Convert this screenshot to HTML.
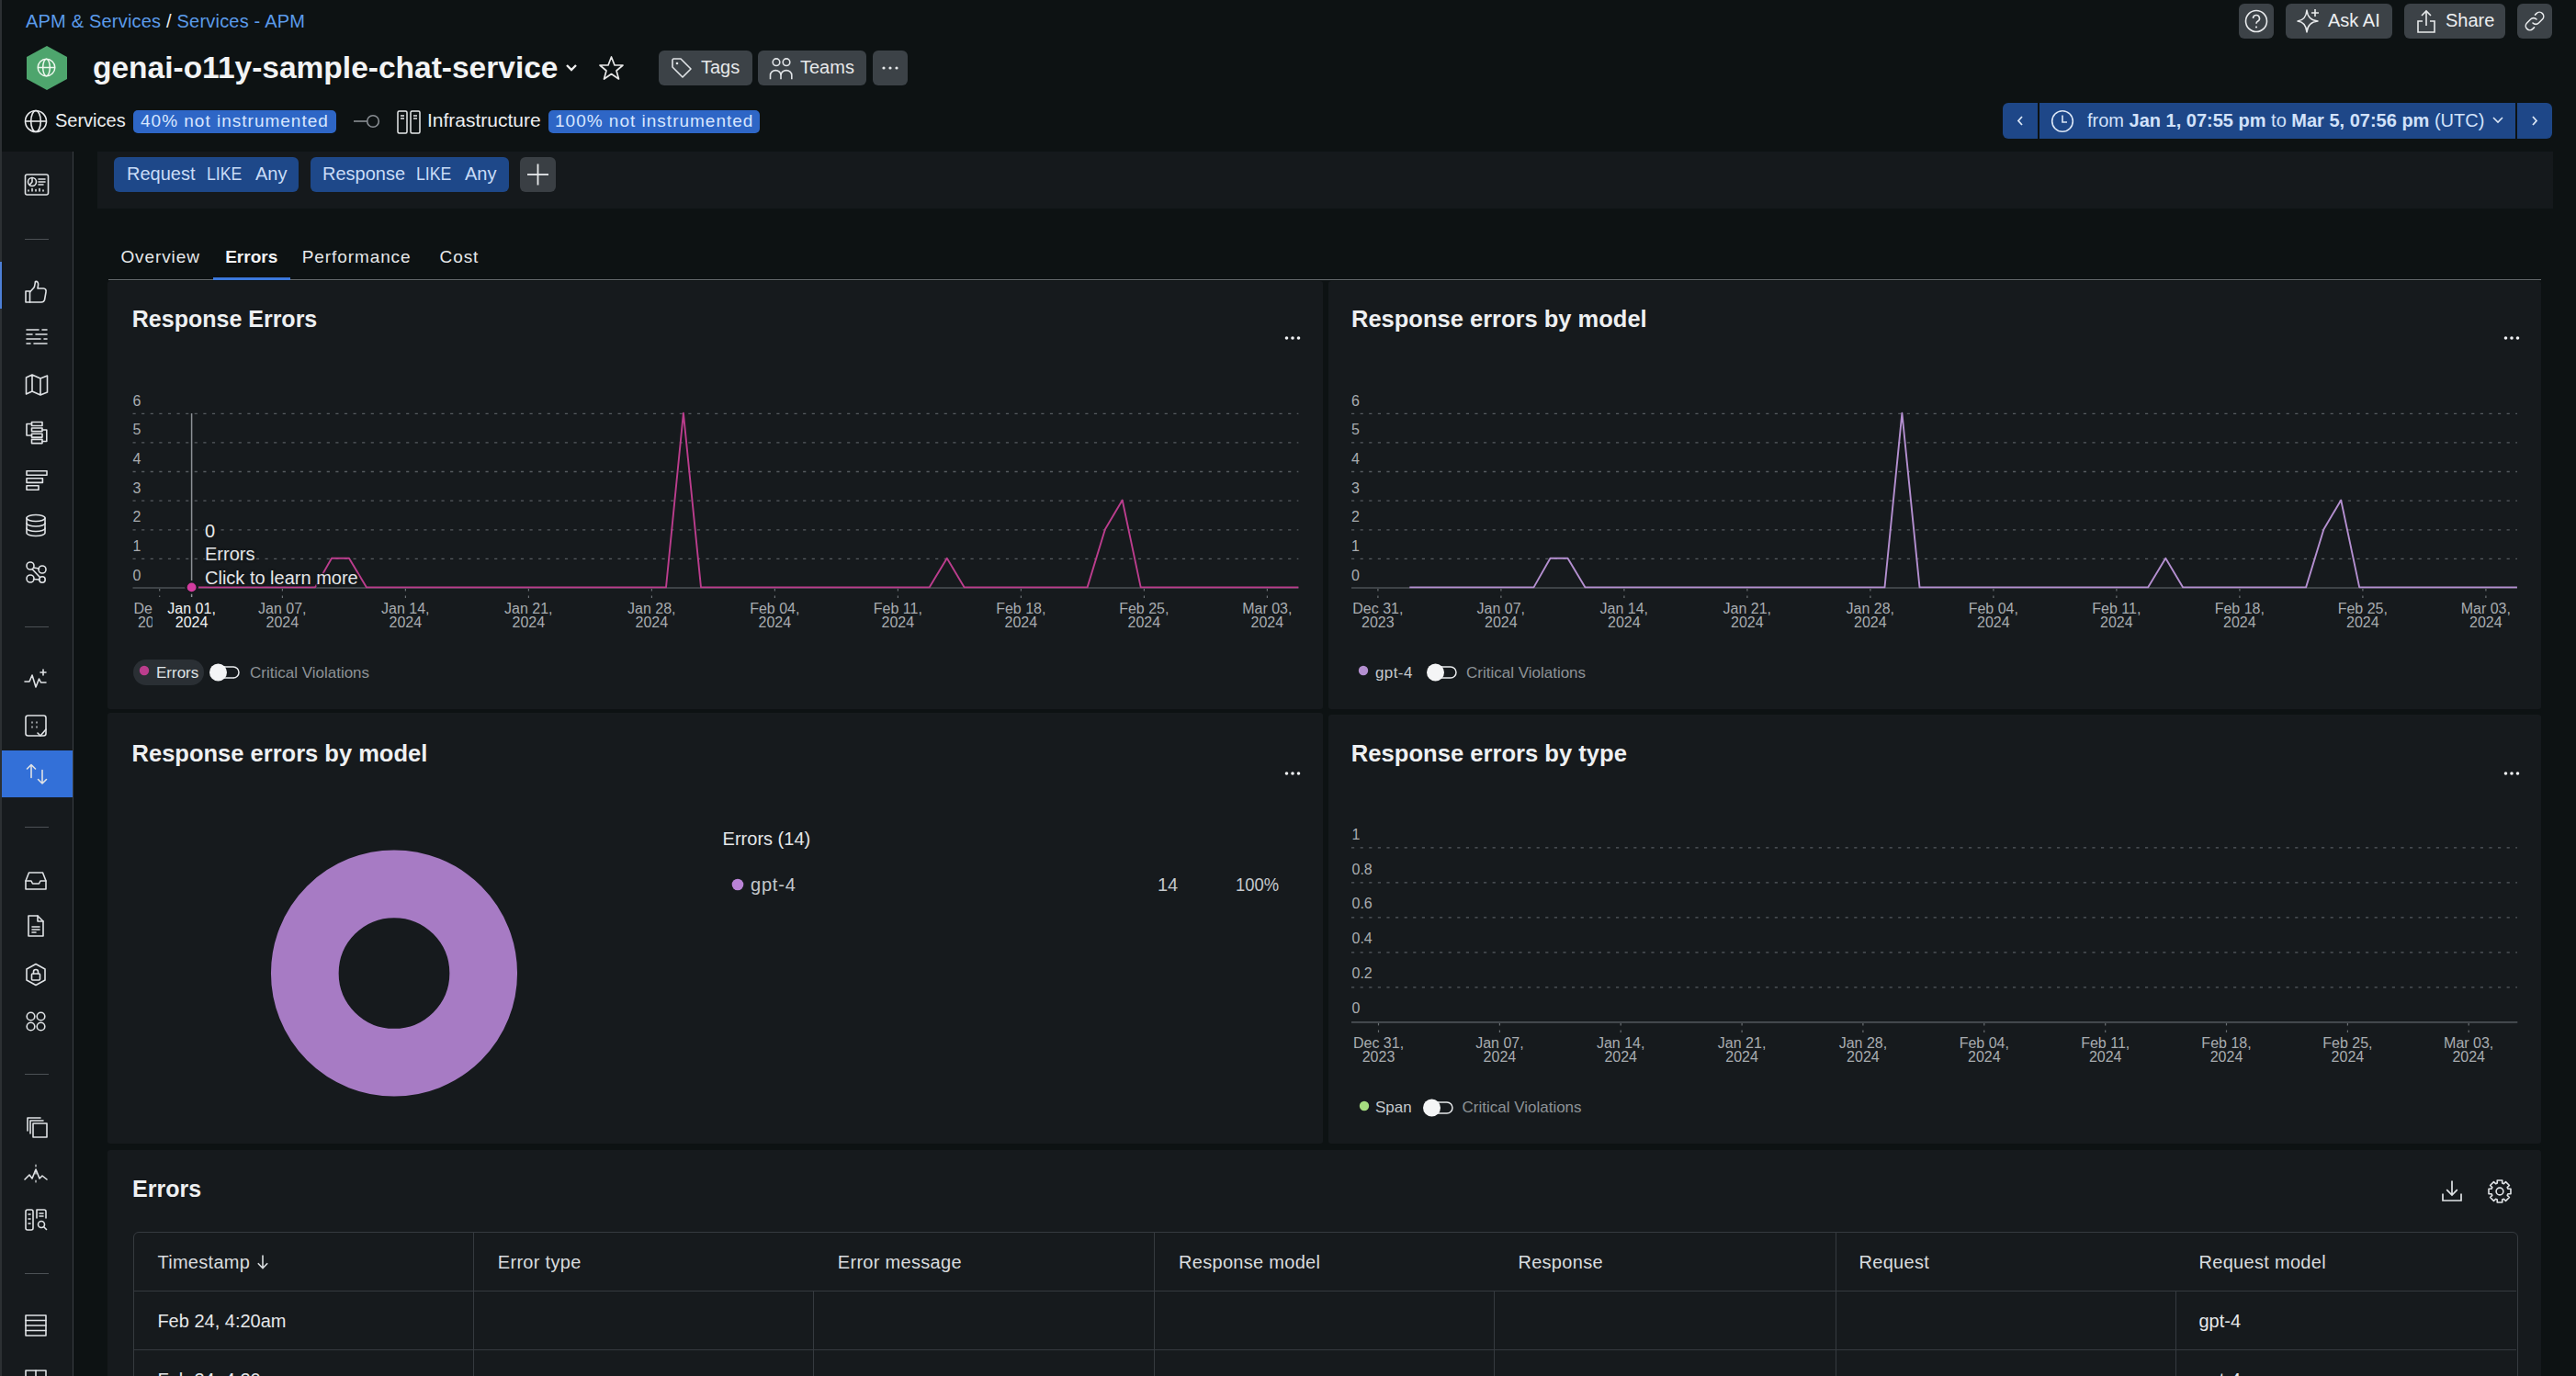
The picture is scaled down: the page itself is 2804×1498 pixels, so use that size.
<!DOCTYPE html><html><head><meta charset="utf-8"><style>
html,body{margin:0;padding:0;width:2804px;height:1498px;overflow:hidden;background:#0d1213;font-family:'Liberation Sans', sans-serif;}
.t{position:absolute;white-space:nowrap;line-height:1;}
.r{position:absolute;}
svg{position:absolute;overflow:visible;}
</style></head><body>
<div class="r" style="left:0px;top:0px;width:2px;height:1498px;background:#2c3033;"></div>
<div class="r" style="left:2px;top:165px;width:77px;height:1333px;background:#161a1d;"></div>
<div class="r" style="left:79px;top:165px;width:1px;height:1333px;background:#3a3f43;"></div>
<div class="r" style="left:0px;top:285px;width:2px;height:51px;background:#4d7fd6;"></div>
<div class="r" style="left:2px;top:817px;width:77px;height:51px;background:#3370d8;"></div>
<div class="r" style="left:106px;top:165px;width:2673px;height:62px;background:#15191c;"></div>
<div class="t" style="left:28px;top:12.9px;font-size:20px;color:#5b9bea;font-weight:400;letter-spacing:0.2px;">APM &amp; Services <span style="color:#e8eaec">/</span> Services - APM</div>
<svg style="left:29px;top:50px" width="44" height="48" viewBox="0 0 44 48"><polygon points="22,0 44,12 44,36 22,48 0,36 0,12" fill="#4ea56d"/><g fill="none" stroke="#eef8ee" stroke-width="1.5"><circle cx="21.5" cy="23.5" r="9.3"/><ellipse cx="21.5" cy="23.5" rx="3.8" ry="9.3"/><line x1="12.2" y1="23.5" x2="30.8" y2="23.5"/></g></svg>
<div class="t" style="left:101px;top:56.6px;font-size:33.5px;color:#f2f3f4;font-weight:700;">genai-o11y-sample-chat-service</div>
<svg style="left:614px;top:68px" width="16" height="12" viewBox="0 0 16 12"><polyline points="3,3 8,8 13,3" fill="none" stroke="#f0f0f0" stroke-width="2.4"/></svg>
<svg style="left:651px;top:60px" width="29" height="28" viewBox="0 0 29 28"><polygon points="14.5,2 18,11 27,11 20,17 22.5,26 14.5,20.5 6.5,26 9,17 2,11 11,11" fill="none" stroke="#e8e8e8" stroke-width="1.7" stroke-linejoin="round"/></svg>
<div class="r" style="left:717px;top:55px;width:102px;height:38px;background:#3c4247;border-radius:6px;"></div>
<svg style="left:729px;top:61px" width="26" height="26" viewBox="0 0 26 26"><path d="M3 4 L3 12 L14 23 L23 14 L12 3 L4 3 Z" fill="none" stroke="#e0e3e6" stroke-width="1.6" stroke-linejoin="round"/><circle cx="8" cy="8" r="1.3" fill="#e0e3e6"/></svg>
<div class="t" style="left:763px;top:62.8px;font-size:20px;color:#e6e8ea;font-weight:400;">Tags</div>
<div class="r" style="left:825px;top:55px;width:118px;height:38px;background:#3c4247;border-radius:6px;"></div>
<svg style="left:836px;top:60px" width="28" height="28" viewBox="0 0 28 28"><g fill="none" stroke="#e0e3e6" stroke-width="1.6"><circle cx="9" cy="7.7" r="3.8"/><circle cx="20" cy="7.7" r="3.8"/><path d="M2.5 26.3 V22 a5.75 5.4 0 0 1 11.5 0 V26.3"/><path d="M14 22 a5.9 5.4 0 0 1 11.8 0 V26.3"/></g></svg>
<div class="t" style="left:871px;top:62.8px;font-size:20px;color:#e6e8ea;font-weight:400;">Teams</div>
<div class="r" style="left:950px;top:55px;width:38px;height:38px;background:#3c4247;border-radius:6px;"></div>
<svg style="left:950px;top:55px" width="38" height="38"><g fill="#e6e8ea"><circle cx="12" cy="19" r="1.6"/><circle cx="19" cy="19" r="1.6"/><circle cx="26" cy="19" r="1.6"/></g></svg>
<svg style="left:26px;top:119px" width="26" height="26" viewBox="0 0 26 26"><g fill="none" stroke="#e8eaec" stroke-width="1.6"><circle cx="13" cy="13" r="11.5"/><ellipse cx="13" cy="13" rx="5.3" ry="11.5"/><line x1="1.5" y1="13" x2="24.5" y2="13"/></g></svg>
<div class="t" style="left:60px;top:120.5px;font-size:20px;color:#eceef0;font-weight:400;">Services</div>
<div class="r" style="left:145px;top:120px;width:221px;height:25px;background:#2e66c6;border-radius:5px;"></div>
<div class="t" style="left:153px;top:121.9px;font-size:19px;color:#d8e6ff;font-weight:400;letter-spacing:1.0px;">40% not instrumented</div>
<svg style="left:384px;top:124px" width="32" height="16" viewBox="0 0 32 16"><line x1="1" y1="8" x2="15" y2="8" stroke="#8a8f94" stroke-width="1.6"/><circle cx="22" cy="8" r="6.3" fill="none" stroke="#8a8f94" stroke-width="1.6"/></svg>
<svg style="left:432px;top:120px" width="27" height="26" viewBox="0 0 27 26"><g fill="none" stroke="#e8eaec" stroke-width="1.5"><rect x="1" y="1" width="10" height="24" rx="1.5"/><rect x="15" y="1" width="10" height="24" rx="1.5"/><line x1="4" y1="6" x2="8" y2="6"/><line x1="4" y1="9" x2="8" y2="9"/><line x1="18" y1="6" x2="22" y2="6"/><line x1="18" y1="9" x2="22" y2="9"/></g></svg>
<div class="t" style="left:465px;top:119.6px;font-size:21px;color:#eceef0;font-weight:400;">Infrastructure</div>
<div class="r" style="left:597px;top:120px;width:230px;height:25px;background:#2e66c6;border-radius:5px;"></div>
<div class="t" style="left:604px;top:121.9px;font-size:19px;color:#d8e6ff;font-weight:400;letter-spacing:1.0px;">100% not instrumented</div>
<div class="r" style="left:2437px;top:4px;width:38px;height:38px;background:#3c4247;border-radius:6px;"></div>
<svg style="left:2437px;top:4px" width="38" height="38" viewBox="0 0 38 38"><circle cx="19" cy="19" r="11.5" fill="none" stroke="#e8eaec" stroke-width="1.6"/><path d="M15.5 16 a3.5 3.5 0 1 1 5 3.2 c-1.2 0.6 -1.5 1.3 -1.5 2.6" fill="none" stroke="#e8eaec" stroke-width="1.6"/><circle cx="19" cy="25.5" r="1.1" fill="#e8eaec"/></svg>
<div class="r" style="left:2488px;top:4px;width:116px;height:38px;background:#3c4247;border-radius:6px;"></div>
<svg style="left:2499px;top:9px" width="28" height="28" viewBox="0 0 28 28"><path d="M12 4 Q13 15 24 16 Q13 17 12 28 Q11 17 2 16 Q11 15 12 4 Z" fill="none" stroke="#e8eaec" stroke-width="1.5" stroke-linejoin="round" transform="translate(0,-2)"/><path d="M21 1 V9 M17 5 H25" stroke="#e8eaec" stroke-width="1.6"/></svg>
<div class="t" style="left:2534px;top:11.7px;font-size:20px;color:#eceef0;font-weight:400;">Ask AI</div>
<div class="r" style="left:2617px;top:4px;width:110px;height:38px;background:#3c4247;border-radius:6px;"></div>
<svg style="left:2630px;top:10px" width="22" height="26" viewBox="0 0 22 26"><g fill="none" stroke="#e8eaec" stroke-width="1.6"><polyline points="7,13 2,13 2,25 20,25 20,13 15,13"/><line x1="11" y1="2" x2="11" y2="18"/><polyline points="6,7 11,2 16,7"/></g></svg>
<div class="t" style="left:2662px;top:11.7px;font-size:20px;color:#eceef0;font-weight:400;">Share</div>
<div class="r" style="left:2740px;top:4px;width:38px;height:38px;background:#3c4247;border-radius:6px;"></div>
<svg style="left:2740px;top:4px" width="38" height="38" viewBox="0 0 38 38"><g fill="none" stroke="#e8eaec" stroke-width="1.6" stroke-linecap="round"><path d="M17 21 a4.5 4.5 0 0 0 6.4 0 l4 -4 a4.5 4.5 0 0 0 -6.4 -6.4 l-1.5 1.5"/><path d="M21 17 a4.5 4.5 0 0 0 -6.4 0 l-4 4 a4.5 4.5 0 0 0 6.4 6.4 l1.5 -1.5"/></g></svg>
<div class="r" style="left:2180px;top:112px;width:38px;height:39px;background:#1e4788;border-radius:6px 0 0 6px;"></div>
<div class="r" style="left:2220px;top:112px;width:518px;height:39px;background:#1e4788;"></div>
<div class="r" style="left:2740px;top:112px;width:38px;height:39px;background:#1e4788;border-radius:0 6px 6px 0;"></div>
<svg style="left:2180px;top:112px" width="38" height="39"><polyline points="21,15 17,19.5 21,24" fill="none" stroke="#dbe6f5" stroke-width="1.8"/></svg>
<svg style="left:2740px;top:112px" width="38" height="39"><polyline points="17,15 21,19.5 17,24" fill="none" stroke="#dbe6f5" stroke-width="1.8"/></svg>
<svg style="left:2232px;top:119px" width="26" height="26" viewBox="0 0 26 26"><circle cx="13" cy="13" r="11.3" fill="none" stroke="#dbe6f5" stroke-width="1.6"/><polyline points="13,6.5 13,14 18,14" fill="none" stroke="#dbe6f5" stroke-width="1.6"/></svg>
<div class="t" style="left:2272px;top:121.0px;font-size:20px;color:#d2e2fa;font-weight:400;">from <b>Jan 1, 07:55 pm</b> to <b>Mar 5, 07:56 pm</b> (UTC)</div>
<svg style="left:2712px;top:124px" width="14" height="14"><polyline points="2,4 7,9 12,4" fill="none" stroke="#dbe6f5" stroke-width="1.6"/></svg>
<div class="r" style="left:124px;top:171px;width:201px;height:38px;background:#1e4889;border-radius:6px;"></div>
<div class="t" style="left:138px;top:179.3px;font-size:20px;color:#c9dcf7;font-weight:400;">Request</div>
<div class="t" style="left:225px;top:179.3px;font-size:20px;color:#c9dcf7;font-weight:400;transform:scaleX(0.885);transform-origin:left;">LIKE</div>
<div class="t" style="left:278px;top:179.3px;font-size:20px;color:#c9dcf7;font-weight:400;">Any</div>
<div class="r" style="left:338px;top:171px;width:216px;height:38px;background:#1e4889;border-radius:6px;"></div>
<div class="t" style="left:351px;top:179.3px;font-size:20px;color:#c9dcf7;font-weight:400;">Response</div>
<div class="t" style="left:453px;top:179.3px;font-size:20px;color:#c9dcf7;font-weight:400;transform:scaleX(0.885);transform-origin:left;">LIKE</div>
<div class="t" style="left:506px;top:179.3px;font-size:20px;color:#c9dcf7;font-weight:400;">Any</div>
<div class="r" style="left:566px;top:171px;width:39px;height:38px;background:#3a3f44;border-radius:6px;"></div>
<svg style="left:566px;top:171px" width="39" height="38"><g stroke="#e8eaec" stroke-width="1.8"><line x1="8" y1="19" x2="31" y2="19"/><line x1="19.5" y1="7.5" x2="19.5" y2="30.5"/></g></svg>
<div class="t" style="left:131.4px;top:269.6px;font-size:19px;color:#e6e8ea;font-weight:400;letter-spacing:0.9px;">Overview</div>
<div class="t" style="left:245.2px;top:269.6px;font-size:19px;color:#f4f5f6;font-weight:700;">Errors</div>
<div class="t" style="left:328.8px;top:269.6px;font-size:19px;color:#e6e8ea;font-weight:400;letter-spacing:0.9px;">Performance</div>
<div class="t" style="left:478.6px;top:269.6px;font-size:19px;color:#e6e8ea;font-weight:400;letter-spacing:0.9px;">Cost</div>
<div class="r" style="left:118px;top:304px;width:2648px;height:1px;background:#676c70;"></div>
<div class="r" style="left:232px;top:301.5px;width:84px;height:3.5px;background:#3b78dc;"></div>
<svg style="left:25.5px;top:187.0px" width="28" height="28" viewBox="0 0 28 28"><g fill="none" stroke="#dfe2e5" stroke-width="1.6" stroke-linecap="round" stroke-linejoin="round"><rect x="1.5" y="3" width="25" height="22" rx="2"/><circle cx="9" cy="11" r="4.5"/><path d="M9 6.5 V11 L6.5 14"/><path d="M16 8 H23 M16 11 H23 M16 14 H21"/><path d="M5 21 V20 M9 21 V18.5 M13 21 V19.5 M17 21 V18.5 M21 21 V20"/></g></svg>
<div class="r" style="left:27px;top:260px;width:26px;height:1px;background:#4c5155;"></div>
<svg style="left:25.0px;top:303.0px" width="28" height="28" viewBox="0 0 28 28"><g fill="none" stroke="#dfe2e5" stroke-width="1.6" stroke-linecap="round" stroke-linejoin="round"><path d="M3 14 H7.5 V26 H3 Z"/><path d="M7.5 15 L12 10 C13 8.5 13 6 13.5 3.5 C16 3 17 5 16.5 8 L16 11 H22.5 C24.5 11 25.5 13 25 15 L23.5 23.5 C23 25 22 26 20 26 H7.5"/></g></svg>
<svg style="left:25.5px;top:353.0px" width="28" height="28" viewBox="0 0 28 28"><g fill="none" stroke="#dfe2e5" stroke-width="1.6" stroke-linecap="round" stroke-linejoin="round"><path d="M3 6 H16 M20 6 H25 M3 11 H9 M13 11 H25 M3 16 H18 M22 16 H25 M3 21 H7 M11 21 H25"/></g></svg>
<svg style="left:25.5px;top:405.0px" width="28" height="28" viewBox="0 0 28 28"><g fill="none" stroke="#dfe2e5" stroke-width="1.6" stroke-linecap="round" stroke-linejoin="round"><path d="M2.5 6 L9 3 L18 7 L25.5 4 V22 L18 25 L9 21 L2.5 24 Z M9 3 V21 M18 7 V25"/></g></svg>
<svg style="left:25.799999999999997px;top:457.0px" width="28" height="28" viewBox="0 0 28 28"><g fill="none" stroke="#dfe2e5" stroke-width="1.6" stroke-linecap="round" stroke-linejoin="round"><rect x="8.5" y="2.5" width="11.5" height="4"/><rect x="8.5" y="9" width="11.5" height="3.6"/><rect x="8.5" y="15.2" width="11.5" height="3.9"/><rect x="8.5" y="21.4" width="11.5" height="4.2"/><path d="M8.5 4.5 H3 V17 H8.5 M20 11 H24.8 V23.5 H20"/></g></svg>
<svg style="left:25.6px;top:509.29999999999995px" width="28" height="28" viewBox="0 0 28 28"><g fill="none" stroke="#dfe2e5" stroke-width="1.6" stroke-linecap="round" stroke-linejoin="round"><rect x="3" y="3.8" width="22" height="4.4"/><rect x="3" y="11.8" width="17.4" height="4.6"/><rect x="3" y="19.8" width="13" height="4.4"/></g></svg>
<svg style="left:25.0px;top:558.0px" width="28" height="28" viewBox="0 0 28 28"><g fill="none" stroke="#dfe2e5" stroke-width="1.6" stroke-linecap="round" stroke-linejoin="round"><ellipse cx="14" cy="6" rx="10" ry="3.5"/><path d="M4 6 V22 C4 24 8.5 25.5 14 25.5 C19.5 25.5 24 24 24 22 V6"/><path d="M4 11.5 C4 13.5 8.5 15 14 15 C19.5 15 24 13.5 24 11.5 M4 17 C4 19 8.5 20.5 14 20.5 C19.5 20.5 24 19 24 17"/></g></svg>
<svg style="left:25.0px;top:609.0px" width="28" height="28" viewBox="0 0 28 28"><g fill="none" stroke="#dfe2e5" stroke-width="1.6" stroke-linecap="round" stroke-linejoin="round"><circle cx="8" cy="7" r="4"/><circle cx="21" cy="11" r="4"/><circle cx="8" cy="21" r="4"/><circle cx="21" cy="22" r="3.2"/><path d="M11.5 9 L17.5 10 M10 10.5 L18 19 M11.5 21.5 L17.8 22"/></g></svg>
<div class="r" style="left:27px;top:682px;width:26px;height:1px;background:#4c5155;"></div>
<svg style="left:25.0px;top:725.0px" width="28" height="28" viewBox="0 0 28 28"><g fill="none" stroke="#dfe2e5" stroke-width="1.6" stroke-linecap="round" stroke-linejoin="round"><path d="M2 17 H7 L10 10 L14 23 L17.5 14 L19.5 18 H25"/><path d="M22 4 V10 M19 7 H25"/></g></svg>
<svg style="left:25.0px;top:776.0px" width="28" height="28" viewBox="0 0 28 28"><g fill="none" stroke="#dfe2e5" stroke-width="1.6" stroke-linecap="round" stroke-linejoin="round"><rect x="3" y="3" width="22" height="22" rx="2.5" stroke-dasharray="0"/><circle cx="10" cy="10.5" r="0.3"/><circle cx="15" cy="10.5" r="0.3"/><circle cx="10" cy="15.5" r="0.3"/><circle cx="15" cy="15.5" r="0.3"/><path d="M16 22 L19 25 L25 18" /></g></svg>
<svg style="left:25.5px;top:828.5px" width="28" height="28" viewBox="0 0 28 28"><g fill="none" stroke="#dfe2e5" stroke-width="1.6" stroke-linecap="round" stroke-linejoin="round"><path d="M8 17.5 V3.5 M3.5 8 L8 3.5 L12.5 8"/><path d="M20 9.5 V24 M15.5 19.5 L20 24 L24.5 19.5"/></g></svg>
<div class="r" style="left:27px;top:900px;width:26px;height:1px;background:#4c5155;"></div>
<svg style="left:25.0px;top:944.5px" width="28" height="28" viewBox="0 0 28 28"><g fill="none" stroke="#dfe2e5" stroke-width="1.6" stroke-linecap="round" stroke-linejoin="round"><path d="M3 14 L6.5 5 H21.5 L25 14 V23 H3 Z"/><path d="M3 14 H9 L10.5 17 H17.5 L19 14 H25"/></g></svg>
<svg style="left:24.5px;top:994.0px" width="28" height="28" viewBox="0 0 28 28"><g fill="none" stroke="#dfe2e5" stroke-width="1.6" stroke-linecap="round" stroke-linejoin="round"><path d="M6 3 H16 L22 9 V25 H6 Z"/><path d="M16 3 V9 H22"/><path d="M10 15 H18 M10 18 H18 M10 21 H14"/></g></svg>
<svg style="left:25.0px;top:1047.0px" width="28" height="28" viewBox="0 0 28 28"><g fill="none" stroke="#dfe2e5" stroke-width="1.6" stroke-linecap="round" stroke-linejoin="round"><path d="M14 2.5 L24 8 V20 L14 25.5 L4 20 V8 Z"/><rect x="9.5" y="13" width="9" height="7" rx="1"/><path d="M11.5 13 V11 a2.5 2.5 0 0 1 5 0 V13"/></g></svg>
<svg style="left:25.0px;top:1097.5px" width="28" height="28" viewBox="0 0 28 28"><g fill="none" stroke="#dfe2e5" stroke-width="1.6" stroke-linecap="round" stroke-linejoin="round"><circle cx="8.5" cy="8.5" r="4.3"/><circle cx="19.5" cy="8.5" r="4.3"/><circle cx="8.5" cy="19.5" r="4.3"/><circle cx="19.5" cy="19.5" r="4.3"/></g></svg>
<div class="r" style="left:27px;top:1169px;width:26px;height:1px;background:#4c5155;"></div>
<svg style="left:25.5px;top:1213.0px" width="28" height="28" viewBox="0 0 28 28"><g fill="none" stroke="#dfe2e5" stroke-width="1.6" stroke-linecap="round" stroke-linejoin="round"><path d="M4 18 V4 H18"/><path d="M7 21 V7 H21"/><rect x="10" y="10" width="15" height="15"/></g></svg>
<svg style="left:25.0px;top:1264.0px" width="28" height="28" viewBox="0 0 28 28"><g fill="none" stroke="#dfe2e5" stroke-width="1.6" stroke-linecap="round" stroke-linejoin="round"><path d="M2 20 L7 15 L10 19 L14 9 L18 19 L21 16 L26 20"/><path d="M14 4 V6 M14 12 V14 M14 21 V23" stroke-width="1.2"/></g></svg>
<svg style="left:25.0px;top:1314.0px" width="28" height="28" viewBox="0 0 28 28"><g fill="none" stroke="#dfe2e5" stroke-width="1.6" stroke-linecap="round" stroke-linejoin="round"><rect x="3" y="3" width="8" height="22" rx="2"/><path d="M6 8 H8 M6 13 H8 M6 18 H8"/><path d="M15 12 V3 H23 a2 2 0 0 1 2 2 V12"/><path d="M18 7 H22 M18 10 H22"/><circle cx="20" cy="19" r="3.5"/><path d="M22.5 21.5 L25.5 24.5"/></g></svg>
<div class="r" style="left:27px;top:1386px;width:26px;height:1px;background:#4c5155;"></div>
<svg style="left:25.0px;top:1429.0px" width="28" height="28" viewBox="0 0 28 28"><g fill="none" stroke="#dfe2e5" stroke-width="1.6" stroke-linecap="round" stroke-linejoin="round"><rect x="3" y="3" width="22" height="22"/><path d="M3 8.5 H25 M3 14 H25 M3 19.5 H25"/></g></svg>
<svg style="left:25.0px;top:1489.0px" width="28" height="28" viewBox="0 0 28 28"><g fill="none" stroke="#dfe2e5" stroke-width="1.6" stroke-linecap="round" stroke-linejoin="round"><rect x="3" y="3" width="22" height="22"/><path d="M3 10 H25 M14 3 V10"/></g></svg>
<div class="r" style="left:117px;top:306px;width:1323px;height:466px;background:#161a1d;border-radius:3px;"></div>
<div class="r" style="left:1446px;top:306px;width:1320px;height:466px;background:#161a1d;border-radius:3px;"></div>
<div class="r" style="left:117px;top:776px;width:1323px;height:469px;background:#161a1d;border-radius:3px;"></div>
<div class="r" style="left:1446px;top:778px;width:1320px;height:467px;background:#161a1d;border-radius:3px;"></div>
<div class="r" style="left:117px;top:1252px;width:2649px;height:258px;background:#161a1d;border-radius:3px;"></div>
<div class="t" style="left:143.8px;top:335.4px;font-size:25px;color:#eef0f2;font-weight:700;">Response Errors</div>
<svg style="left:1395px;top:362.4px" width="24" height="12"><g fill="#f0f2f4"><circle cx="5.5" cy="6" r="1.8"/><circle cx="12" cy="6" r="1.8"/><circle cx="18.5" cy="6" r="1.8"/></g></svg>
<div class="t" style="left:144.5px;top:618.5px;font-size:16px;color:#a8acb0;font-weight:400;">0</div>
<div class="t" style="left:144.5px;top:586.9px;font-size:16px;color:#a8acb0;font-weight:400;">1</div>
<div class="t" style="left:144.5px;top:555.3px;font-size:16px;color:#a8acb0;font-weight:400;">2</div>
<div class="t" style="left:144.5px;top:523.6px;font-size:16px;color:#a8acb0;font-weight:400;">3</div>
<div class="t" style="left:144.5px;top:492.0px;font-size:16px;color:#a8acb0;font-weight:400;">4</div>
<div class="t" style="left:144.5px;top:460.4px;font-size:16px;color:#a8acb0;font-weight:400;">5</div>
<div class="t" style="left:144.5px;top:428.8px;font-size:16px;color:#a8acb0;font-weight:400;">6</div>
<svg style="left:0px;top:0px" width="2804" height="1498"><line x1="144.5" y1="608.4" x2="1413.4" y2="608.4" stroke="#565b60" stroke-width="1.3" stroke-dasharray="3.2 6.4"/><line x1="144.5" y1="576.8" x2="1413.4" y2="576.8" stroke="#565b60" stroke-width="1.3" stroke-dasharray="3.2 6.4"/><line x1="144.5" y1="545.1" x2="1413.4" y2="545.1" stroke="#565b60" stroke-width="1.3" stroke-dasharray="3.2 6.4"/><line x1="144.5" y1="513.5" x2="1413.4" y2="513.5" stroke="#565b60" stroke-width="1.3" stroke-dasharray="3.2 6.4"/><line x1="144.5" y1="481.9" x2="1413.4" y2="481.9" stroke="#565b60" stroke-width="1.3" stroke-dasharray="3.2 6.4"/><line x1="144.5" y1="450.3" x2="1413.4" y2="450.3" stroke="#565b60" stroke-width="1.3" stroke-dasharray="3.2 6.4"/><line x1="144.5" y1="640" x2="1413.4" y2="640" stroke="#4b5055" stroke-width="1.5"/><line x1="307.4" y1="641" x2="307.4" y2="643.5" stroke="#6a6f73" stroke-width="1.2"/><line x1="307.4" y1="648.5" x2="307.4" y2="651" stroke="#6a6f73" stroke-width="1.2"/><line x1="441.4" y1="641" x2="441.4" y2="643.5" stroke="#6a6f73" stroke-width="1.2"/><line x1="441.4" y1="648.5" x2="441.4" y2="651" stroke="#6a6f73" stroke-width="1.2"/><line x1="575.4" y1="641" x2="575.4" y2="643.5" stroke="#6a6f73" stroke-width="1.2"/><line x1="575.4" y1="648.5" x2="575.4" y2="651" stroke="#6a6f73" stroke-width="1.2"/><line x1="709.4" y1="641" x2="709.4" y2="643.5" stroke="#6a6f73" stroke-width="1.2"/><line x1="709.4" y1="648.5" x2="709.4" y2="651" stroke="#6a6f73" stroke-width="1.2"/><line x1="843.4" y1="641" x2="843.4" y2="643.5" stroke="#6a6f73" stroke-width="1.2"/><line x1="843.4" y1="648.5" x2="843.4" y2="651" stroke="#6a6f73" stroke-width="1.2"/><line x1="977.4" y1="641" x2="977.4" y2="643.5" stroke="#6a6f73" stroke-width="1.2"/><line x1="977.4" y1="648.5" x2="977.4" y2="651" stroke="#6a6f73" stroke-width="1.2"/><line x1="1111.4" y1="641" x2="1111.4" y2="643.5" stroke="#6a6f73" stroke-width="1.2"/><line x1="1111.4" y1="648.5" x2="1111.4" y2="651" stroke="#6a6f73" stroke-width="1.2"/><line x1="1245.4" y1="641" x2="1245.4" y2="643.5" stroke="#6a6f73" stroke-width="1.2"/><line x1="1245.4" y1="648.5" x2="1245.4" y2="651" stroke="#6a6f73" stroke-width="1.2"/><line x1="1379.4" y1="641" x2="1379.4" y2="643.5" stroke="#6a6f73" stroke-width="1.2"/><line x1="1379.4" y1="648.5" x2="1379.4" y2="651" stroke="#6a6f73" stroke-width="1.2"/><line x1="208.6" y1="450" x2="208.6" y2="651" stroke="#8c9196" stroke-width="1.5"/><line x1="173.7" y1="641" x2="173.7" y2="643.5" stroke="#6a6f73" stroke-width="1.2"/><line x1="173.7" y1="648.5" x2="173.7" y2="651" stroke="#6a6f73" stroke-width="1.2"/><polyline points="207.8,639.4 343.0,639.4 361.0,607.8 380.0,607.8 399.0,639.4 725.0,639.4 743.9,449.7 763.0,639.4 1011.6,639.4 1030.8,607.8 1049.7,639.4 1183.6,639.4 1202.9,576.2 1221.7,544.5 1241.7,639.4 1413.4,639.4" fill="none" stroke="#bb3d8d" stroke-width="1.9" stroke-linejoin="round"/><circle cx="208.6" cy="639.4" r="7.4" fill="#161a1d"/><circle cx="208.6" cy="639.4" r="4.9" fill="#d23c9f"/></svg>
<div class="t" style="left:307.3px;top:655.0px;font-size:16px;line-height:15.2px;color:#a8acb0;text-align:center;transform:translateX(-50%)">Jan 07,<br>2024</div>
<div class="t" style="left:441.3px;top:655.0px;font-size:16px;line-height:15.2px;color:#a8acb0;text-align:center;transform:translateX(-50%)">Jan 14,<br>2024</div>
<div class="t" style="left:575.3px;top:655.0px;font-size:16px;line-height:15.2px;color:#a8acb0;text-align:center;transform:translateX(-50%)">Jan 21,<br>2024</div>
<div class="t" style="left:709.3px;top:655.0px;font-size:16px;line-height:15.2px;color:#a8acb0;text-align:center;transform:translateX(-50%)">Jan 28,<br>2024</div>
<div class="t" style="left:843.3px;top:655.0px;font-size:16px;line-height:15.2px;color:#a8acb0;text-align:center;transform:translateX(-50%)">Feb 04,<br>2024</div>
<div class="t" style="left:977.3px;top:655.0px;font-size:16px;line-height:15.2px;color:#a8acb0;text-align:center;transform:translateX(-50%)">Feb 11,<br>2024</div>
<div class="t" style="left:1111.3px;top:655.0px;font-size:16px;line-height:15.2px;color:#a8acb0;text-align:center;transform:translateX(-50%)">Feb 18,<br>2024</div>
<div class="t" style="left:1245.3px;top:655.0px;font-size:16px;line-height:15.2px;color:#a8acb0;text-align:center;transform:translateX(-50%)">Feb 25,<br>2024</div>
<div class="t" style="left:1379.3px;top:655.0px;font-size:16px;line-height:15.2px;color:#a8acb0;text-align:center;transform:translateX(-50%)">Mar 03,<br>2024</div>
<div class="t" style="left:145.5px;top:655px;font-size:16px;line-height:15.2px;color:#a8acb0;">Dec<br>&nbsp;20</div>
<div class="r" style="left:166px;top:650px;width:62px;height:36px;background:#161a1d;"></div>
<div class="t" style="left:208.6px;top:655px;font-size:16px;line-height:15.2px;color:#f2f3f4;text-align:center;transform:translateX(-50%)">Jan 01,<br>2024</div>
<div class="t" style="left:223px;top:567.9px;font-size:20px;color:#e8e9ea;font-weight:400;text-shadow:1.5px 1.5px 1px #161a1d,-1.5px -1.5px 1px #161a1d,1.5px -1.5px 1px #161a1d,-1.5px 1.5px 1px #161a1d,0 0 3px #161a1d;">0</div>
<div class="t" style="left:223px;top:592.5px;font-size:20px;color:#e4e6e8;font-weight:400;text-shadow:1.5px 1.5px 1px #161a1d,-1.5px -1.5px 1px #161a1d,1.5px -1.5px 1px #161a1d,-1.5px 1.5px 1px #161a1d,0 0 3px #161a1d;">Errors</div>
<div class="t" style="left:223px;top:619.2px;font-size:20px;color:#e4e6e8;font-weight:400;text-shadow:1.5px 1.5px 1px #161a1d,-1.5px -1.5px 1px #161a1d,1.5px -1.5px 1px #161a1d,-1.5px 1.5px 1px #161a1d,0 0 3px #161a1d;">Click to learn more</div>
<div class="r" style="left:144.5px;top:718.4px;width:77.5px;height:27.4px;background:#2a2f34;border-radius:14px;"></div>
<svg style="left:151px;top:724px" width="12" height="12"><circle cx="6" cy="6" r="5.2" fill="#bb3d8d"/></svg>
<div class="t" style="left:170px;top:724.0px;font-size:17px;color:#dfe2e5;font-weight:400;">Errors</div>
<svg style="left:227px;top:721px" width="36" height="22" viewBox="0 0 36 22"><rect x="4" y="5" width="29" height="12" rx="6" fill="none" stroke="#e8eaec" stroke-width="1.5"/><circle cx="10.5" cy="11" r="9.5" fill="#f4f5f6"/></svg>
<div class="t" style="left:272px;top:724.0px;font-size:17px;color:#8d9296;font-weight:400;">Critical Violations</div>
<div class="t" style="left:1471px;top:335.0px;font-size:25.5px;color:#eef0f2;font-weight:700;">Response errors by model</div>
<svg style="left:2722px;top:362.4px" width="24" height="12"><g fill="#f0f2f4"><circle cx="5.5" cy="6" r="1.8"/><circle cx="12" cy="6" r="1.8"/><circle cx="18.5" cy="6" r="1.8"/></g></svg>
<div class="t" style="left:1471px;top:618.5px;font-size:16px;color:#a8acb0;font-weight:400;">0</div>
<div class="t" style="left:1471px;top:586.9px;font-size:16px;color:#a8acb0;font-weight:400;">1</div>
<div class="t" style="left:1471px;top:555.3px;font-size:16px;color:#a8acb0;font-weight:400;">2</div>
<div class="t" style="left:1471px;top:523.6px;font-size:16px;color:#a8acb0;font-weight:400;">3</div>
<div class="t" style="left:1471px;top:492.0px;font-size:16px;color:#a8acb0;font-weight:400;">4</div>
<div class="t" style="left:1471px;top:460.4px;font-size:16px;color:#a8acb0;font-weight:400;">5</div>
<div class="t" style="left:1471px;top:428.8px;font-size:16px;color:#a8acb0;font-weight:400;">6</div>
<svg style="left:0px;top:0px" width="2804" height="1498"><line x1="1471" y1="608.4" x2="2740" y2="608.4" stroke="#565b60" stroke-width="1.3" stroke-dasharray="3.2 6.4"/><line x1="1471" y1="576.8" x2="2740" y2="576.8" stroke="#565b60" stroke-width="1.3" stroke-dasharray="3.2 6.4"/><line x1="1471" y1="545.1" x2="2740" y2="545.1" stroke="#565b60" stroke-width="1.3" stroke-dasharray="3.2 6.4"/><line x1="1471" y1="513.5" x2="2740" y2="513.5" stroke="#565b60" stroke-width="1.3" stroke-dasharray="3.2 6.4"/><line x1="1471" y1="481.9" x2="2740" y2="481.9" stroke="#565b60" stroke-width="1.3" stroke-dasharray="3.2 6.4"/><line x1="1471" y1="450.3" x2="2740" y2="450.3" stroke="#565b60" stroke-width="1.3" stroke-dasharray="3.2 6.4"/><line x1="1471" y1="640" x2="2740" y2="640" stroke="#4b5055" stroke-width="1.5"/><line x1="1499.9" y1="641" x2="1499.9" y2="643.5" stroke="#6a6f73" stroke-width="1.2"/><line x1="1499.9" y1="648.5" x2="1499.9" y2="651" stroke="#6a6f73" stroke-width="1.2"/><line x1="1633.9" y1="641" x2="1633.9" y2="643.5" stroke="#6a6f73" stroke-width="1.2"/><line x1="1633.9" y1="648.5" x2="1633.9" y2="651" stroke="#6a6f73" stroke-width="1.2"/><line x1="1767.9" y1="641" x2="1767.9" y2="643.5" stroke="#6a6f73" stroke-width="1.2"/><line x1="1767.9" y1="648.5" x2="1767.9" y2="651" stroke="#6a6f73" stroke-width="1.2"/><line x1="1901.9" y1="641" x2="1901.9" y2="643.5" stroke="#6a6f73" stroke-width="1.2"/><line x1="1901.9" y1="648.5" x2="1901.9" y2="651" stroke="#6a6f73" stroke-width="1.2"/><line x1="2035.9" y1="641" x2="2035.9" y2="643.5" stroke="#6a6f73" stroke-width="1.2"/><line x1="2035.9" y1="648.5" x2="2035.9" y2="651" stroke="#6a6f73" stroke-width="1.2"/><line x1="2169.9" y1="641" x2="2169.9" y2="643.5" stroke="#6a6f73" stroke-width="1.2"/><line x1="2169.9" y1="648.5" x2="2169.9" y2="651" stroke="#6a6f73" stroke-width="1.2"/><line x1="2303.9" y1="641" x2="2303.9" y2="643.5" stroke="#6a6f73" stroke-width="1.2"/><line x1="2303.9" y1="648.5" x2="2303.9" y2="651" stroke="#6a6f73" stroke-width="1.2"/><line x1="2437.9" y1="641" x2="2437.9" y2="643.5" stroke="#6a6f73" stroke-width="1.2"/><line x1="2437.9" y1="648.5" x2="2437.9" y2="651" stroke="#6a6f73" stroke-width="1.2"/><line x1="2571.9" y1="641" x2="2571.9" y2="643.5" stroke="#6a6f73" stroke-width="1.2"/><line x1="2571.9" y1="648.5" x2="2571.9" y2="651" stroke="#6a6f73" stroke-width="1.2"/><line x1="2705.9" y1="641" x2="2705.9" y2="643.5" stroke="#6a6f73" stroke-width="1.2"/><line x1="2705.9" y1="648.5" x2="2705.9" y2="651" stroke="#6a6f73" stroke-width="1.2"/><polyline points="1534.3,639.4 1669.5,639.4 1687.5,607.8 1706.5,607.8 1725.5,639.4 2051.5,639.4 2070.4,449.7 2089.5,639.4 2338.1,639.4 2357.3,607.8 2376.2,639.4 2510.1,639.4 2529.4,576.2 2548.2,544.5 2568.2,639.4 2739.9,639.4" fill="none" stroke="#b48fd0" stroke-width="1.9" stroke-linejoin="round"/></svg>
<div class="t" style="left:1499.8px;top:655.0px;font-size:16px;line-height:15.2px;color:#a8acb0;text-align:center;transform:translateX(-50%)">Dec 31,<br>2023</div>
<div class="t" style="left:1633.8px;top:655.0px;font-size:16px;line-height:15.2px;color:#a8acb0;text-align:center;transform:translateX(-50%)">Jan 07,<br>2024</div>
<div class="t" style="left:1767.8px;top:655.0px;font-size:16px;line-height:15.2px;color:#a8acb0;text-align:center;transform:translateX(-50%)">Jan 14,<br>2024</div>
<div class="t" style="left:1901.8px;top:655.0px;font-size:16px;line-height:15.2px;color:#a8acb0;text-align:center;transform:translateX(-50%)">Jan 21,<br>2024</div>
<div class="t" style="left:2035.8px;top:655.0px;font-size:16px;line-height:15.2px;color:#a8acb0;text-align:center;transform:translateX(-50%)">Jan 28,<br>2024</div>
<div class="t" style="left:2169.8px;top:655.0px;font-size:16px;line-height:15.2px;color:#a8acb0;text-align:center;transform:translateX(-50%)">Feb 04,<br>2024</div>
<div class="t" style="left:2303.8px;top:655.0px;font-size:16px;line-height:15.2px;color:#a8acb0;text-align:center;transform:translateX(-50%)">Feb 11,<br>2024</div>
<div class="t" style="left:2437.8px;top:655.0px;font-size:16px;line-height:15.2px;color:#a8acb0;text-align:center;transform:translateX(-50%)">Feb 18,<br>2024</div>
<div class="t" style="left:2571.8px;top:655.0px;font-size:16px;line-height:15.2px;color:#a8acb0;text-align:center;transform:translateX(-50%)">Feb 25,<br>2024</div>
<div class="t" style="left:2705.8px;top:655.0px;font-size:16px;line-height:15.2px;color:#a8acb0;text-align:center;transform:translateX(-50%)">Mar 03,<br>2024</div>
<svg style="left:1478px;top:724px" width="12" height="12"><circle cx="6" cy="6" r="5.2" fill="#b48fd0"/></svg>
<div class="t" style="left:1497px;top:724.0px;font-size:17px;color:#c4c8cc;font-weight:400;letter-spacing:0.4px;">gpt-4</div>
<svg style="left:1552px;top:721px" width="36" height="22" viewBox="0 0 36 22"><rect x="4" y="5" width="29" height="12" rx="6" fill="none" stroke="#e8eaec" stroke-width="1.5"/><circle cx="10.5" cy="11" r="9.5" fill="#f4f5f6"/></svg>
<div class="t" style="left:1596px;top:724.0px;font-size:17px;color:#8d9296;font-weight:400;">Critical Violations</div>
<div class="t" style="left:143.6px;top:808.4px;font-size:25.5px;color:#eef0f2;font-weight:700;">Response errors by model</div>
<svg style="left:1395px;top:835.5px" width="24" height="12"><g fill="#f0f2f4"><circle cx="5.5" cy="6" r="1.8"/><circle cx="12" cy="6" r="1.8"/><circle cx="18.5" cy="6" r="1.8"/></g></svg>
<svg style="left:0;top:0" width="2804" height="1498"><circle cx="429" cy="1059.5" r="97.2" fill="none" stroke="#a77bc4" stroke-width="73.7"/></svg>
<div class="t" style="left:786.6px;top:902.5px;font-size:20px;color:#e4e6e8;font-weight:400;">Errors (14)</div>
<svg style="left:796px;top:956px" width="14" height="14"><circle cx="7" cy="7" r="6.3" fill="#b983d6"/></svg>
<div class="t" style="left:817px;top:953.2px;font-size:20px;color:#c4c8cc;font-weight:400;letter-spacing:0.8px;">gpt-4</div>
<div class="t" style="left:1260px;top:953.2px;font-size:20px;color:#c4c8cc;font-weight:400;">14</div>
<div class="t" style="left:1344.7px;top:953.2px;font-size:20px;color:#c4c8cc;font-weight:400;transform:scaleX(0.92);transform-origin:left;">100%</div>
<div class="t" style="left:1470.8px;top:808.3px;font-size:25.6px;color:#eef0f2;font-weight:700;">Response errors by type</div>
<svg style="left:2722px;top:835.5px" width="24" height="12"><g fill="#f0f2f4"><circle cx="5.5" cy="6" r="1.8"/><circle cx="12" cy="6" r="1.8"/><circle cx="18.5" cy="6" r="1.8"/></g></svg>
<svg style="left:0;top:0" width="2804" height="1498"><line x1="1471" y1="1074.9" x2="2740" y2="1074.9" stroke="#565b60" stroke-width="1.3" stroke-dasharray="3.2 6.4"/><line x1="1471" y1="1036.9" x2="2740" y2="1036.9" stroke="#565b60" stroke-width="1.3" stroke-dasharray="3.2 6.4"/><line x1="1471" y1="998.9" x2="2740" y2="998.9" stroke="#565b60" stroke-width="1.3" stroke-dasharray="3.2 6.4"/><line x1="1471" y1="960.9" x2="2740" y2="960.9" stroke="#565b60" stroke-width="1.3" stroke-dasharray="3.2 6.4"/><line x1="1471" y1="922.9" x2="2740" y2="922.9" stroke="#565b60" stroke-width="1.3" stroke-dasharray="3.2 6.4"/><line x1="1471" y1="1112.9" x2="2740.3" y2="1112.9" stroke="#4b5055" stroke-width="1.8"/><line x1="1500.5" y1="1113.9" x2="1500.5" y2="1116.4" stroke="#6a6f73" stroke-width="1.2"/><line x1="1500.5" y1="1121.4" x2="1500.5" y2="1123.9" stroke="#6a6f73" stroke-width="1.2"/><line x1="1632.4" y1="1113.9" x2="1632.4" y2="1116.4" stroke="#6a6f73" stroke-width="1.2"/><line x1="1632.4" y1="1121.4" x2="1632.4" y2="1123.9" stroke="#6a6f73" stroke-width="1.2"/><line x1="1764.2" y1="1113.9" x2="1764.2" y2="1116.4" stroke="#6a6f73" stroke-width="1.2"/><line x1="1764.2" y1="1121.4" x2="1764.2" y2="1123.9" stroke="#6a6f73" stroke-width="1.2"/><line x1="1896.1" y1="1113.9" x2="1896.1" y2="1116.4" stroke="#6a6f73" stroke-width="1.2"/><line x1="1896.1" y1="1121.4" x2="1896.1" y2="1123.9" stroke="#6a6f73" stroke-width="1.2"/><line x1="2027.9" y1="1113.9" x2="2027.9" y2="1116.4" stroke="#6a6f73" stroke-width="1.2"/><line x1="2027.9" y1="1121.4" x2="2027.9" y2="1123.9" stroke="#6a6f73" stroke-width="1.2"/><line x1="2159.8" y1="1113.9" x2="2159.8" y2="1116.4" stroke="#6a6f73" stroke-width="1.2"/><line x1="2159.8" y1="1121.4" x2="2159.8" y2="1123.9" stroke="#6a6f73" stroke-width="1.2"/><line x1="2291.7" y1="1113.9" x2="2291.7" y2="1116.4" stroke="#6a6f73" stroke-width="1.2"/><line x1="2291.7" y1="1121.4" x2="2291.7" y2="1123.9" stroke="#6a6f73" stroke-width="1.2"/><line x1="2423.5" y1="1113.9" x2="2423.5" y2="1116.4" stroke="#6a6f73" stroke-width="1.2"/><line x1="2423.5" y1="1121.4" x2="2423.5" y2="1123.9" stroke="#6a6f73" stroke-width="1.2"/><line x1="2555.4" y1="1113.9" x2="2555.4" y2="1116.4" stroke="#6a6f73" stroke-width="1.2"/><line x1="2555.4" y1="1121.4" x2="2555.4" y2="1123.9" stroke="#6a6f73" stroke-width="1.2"/><line x1="2687.2" y1="1113.9" x2="2687.2" y2="1116.4" stroke="#6a6f73" stroke-width="1.2"/><line x1="2687.2" y1="1121.4" x2="2687.2" y2="1123.9" stroke="#6a6f73" stroke-width="1.2"/></svg>
<div class="t" style="left:1471.5px;top:900.7px;font-size:16px;color:#a8acb0;font-weight:400;">1</div>
<div class="t" style="left:1471.5px;top:938.7px;font-size:16px;color:#a8acb0;font-weight:400;">0.8</div>
<div class="t" style="left:1471.5px;top:976.2px;font-size:16px;color:#a8acb0;font-weight:400;">0.6</div>
<div class="t" style="left:1471.5px;top:1014.2px;font-size:16px;color:#a8acb0;font-weight:400;">0.4</div>
<div class="t" style="left:1471.5px;top:1052.2px;font-size:16px;color:#a8acb0;font-weight:400;">0.2</div>
<div class="t" style="left:1471.5px;top:1090.2px;font-size:16px;color:#a8acb0;font-weight:400;">0</div>
<div class="t" style="left:1500.5px;top:1127.5px;font-size:16px;line-height:15.5px;color:#a8acb0;text-align:center;transform:translateX(-50%)">Dec 31,<br>2023</div>
<div class="t" style="left:1632.4px;top:1127.5px;font-size:16px;line-height:15.5px;color:#a8acb0;text-align:center;transform:translateX(-50%)">Jan 07,<br>2024</div>
<div class="t" style="left:1764.2px;top:1127.5px;font-size:16px;line-height:15.5px;color:#a8acb0;text-align:center;transform:translateX(-50%)">Jan 14,<br>2024</div>
<div class="t" style="left:1896.1px;top:1127.5px;font-size:16px;line-height:15.5px;color:#a8acb0;text-align:center;transform:translateX(-50%)">Jan 21,<br>2024</div>
<div class="t" style="left:2027.9px;top:1127.5px;font-size:16px;line-height:15.5px;color:#a8acb0;text-align:center;transform:translateX(-50%)">Jan 28,<br>2024</div>
<div class="t" style="left:2159.8px;top:1127.5px;font-size:16px;line-height:15.5px;color:#a8acb0;text-align:center;transform:translateX(-50%)">Feb 04,<br>2024</div>
<div class="t" style="left:2291.7px;top:1127.5px;font-size:16px;line-height:15.5px;color:#a8acb0;text-align:center;transform:translateX(-50%)">Feb 11,<br>2024</div>
<div class="t" style="left:2423.5px;top:1127.5px;font-size:16px;line-height:15.5px;color:#a8acb0;text-align:center;transform:translateX(-50%)">Feb 18,<br>2024</div>
<div class="t" style="left:2555.4px;top:1127.5px;font-size:16px;line-height:15.5px;color:#a8acb0;text-align:center;transform:translateX(-50%)">Feb 25,<br>2024</div>
<div class="t" style="left:2687.2px;top:1127.5px;font-size:16px;line-height:15.5px;color:#a8acb0;text-align:center;transform:translateX(-50%)">Mar 03,<br>2024</div>
<svg style="left:1479px;top:1198px" width="12" height="12"><circle cx="6" cy="6" r="5.2" fill="#a5dd7f"/></svg>
<div class="t" style="left:1497px;top:1196.7px;font-size:17px;color:#c4c8cc;font-weight:400;">Span</div>
<svg style="left:1548px;top:1195px" width="36" height="22" viewBox="0 0 36 22"><rect x="4" y="5" width="29" height="12" rx="6" fill="none" stroke="#e8eaec" stroke-width="1.5"/><circle cx="10.5" cy="11" r="9.5" fill="#f4f5f6"/></svg>
<div class="t" style="left:1591.5px;top:1196.7px;font-size:17px;color:#8d9296;font-weight:400;">Critical Violations</div>
<div class="t" style="left:144px;top:1281.8px;font-size:25px;color:#eef0f2;font-weight:700;">Errors</div>
<svg style="left:2655px;top:1282px" width="28" height="28" viewBox="0 0 28 28"><g fill="none" stroke="#e0e3e6" stroke-width="1.7"><path d="M14 3.5 V19 M8.2 13.2 L14 19 L19.8 13.2"/><path d="M4 17.5 V25 H24 V17.5"/></g></svg>
<svg style="left:2706.7px;top:1282.5px" width="28" height="28" viewBox="0 0 28 28"><g fill="none" stroke="#e0e3e6" stroke-width="1.6" stroke-linejoin="round"><circle cx="14" cy="14" r="3.9"/><path d="M11.28 5.11 L11.23 2.02 L16.77 2.02 L16.72 5.11 L18.37 5.79 L20.52 3.57 L24.43 7.48 L22.21 9.63 L22.89 11.28 L25.98 11.23 L25.98 16.77 L22.89 16.72 L22.21 18.37 L24.43 20.52 L20.52 24.43 L18.37 22.21 L16.72 22.89 L16.77 25.98 L11.23 25.98 L11.28 22.89 L9.63 22.21 L7.48 24.43 L3.57 20.52 L5.79 18.37 L5.11 16.72 L2.02 16.77 L2.02 11.23 L5.11 11.28 L5.79 9.63 L3.57 7.48 L7.48 3.57 L9.63 5.79 Z"/></g></svg>
<div class="r" style="left:144.5px;top:1341px;width:2594px;height:200px;border:1px solid #353a3f;border-radius:6px;"></div>
<div class="r" style="left:145px;top:1405px;width:2594px;height:1px;background:#353a3f;"></div>
<div class="r" style="left:145px;top:1469px;width:2594px;height:1px;background:#353a3f;"></div>
<div class="r" style="left:515px;top:1341px;width:1px;height:200px;background:#353a3f;"></div>
<div class="r" style="left:1256px;top:1341px;width:1px;height:200px;background:#353a3f;"></div>
<div class="r" style="left:1998px;top:1341px;width:1px;height:200px;background:#353a3f;"></div>
<div class="r" style="left:885px;top:1405px;width:1px;height:200px;background:#353a3f;"></div>
<div class="r" style="left:1626px;top:1405px;width:1px;height:200px;background:#353a3f;"></div>
<div class="r" style="left:2368px;top:1405px;width:1px;height:200px;background:#353a3f;"></div>
<div class="t" style="left:171.4px;top:1364.0px;font-size:20px;color:#d9dcdf;font-weight:400;letter-spacing:0.3px;">Timestamp</div>
<div class="t" style="left:541.8px;top:1364.0px;font-size:20px;color:#d9dcdf;font-weight:400;letter-spacing:0.3px;">Error type</div>
<div class="t" style="left:911.8px;top:1364.0px;font-size:20px;color:#d9dcdf;font-weight:400;letter-spacing:0.3px;">Error message</div>
<div class="t" style="left:1283px;top:1364.0px;font-size:20px;color:#d9dcdf;font-weight:400;letter-spacing:0.3px;">Response model</div>
<div class="t" style="left:1652.4px;top:1364.0px;font-size:20px;color:#d9dcdf;font-weight:400;letter-spacing:0.3px;">Response</div>
<div class="t" style="left:2023.5px;top:1364.0px;font-size:20px;color:#d9dcdf;font-weight:400;letter-spacing:0.3px;">Request</div>
<div class="t" style="left:2393.5px;top:1364.0px;font-size:20px;color:#d9dcdf;font-weight:400;letter-spacing:0.3px;">Request model</div>
<svg style="left:278px;top:1364px" width="16" height="19"><g fill="none" stroke="#d9dcdf" stroke-width="1.6"><path d="M8 2.5 V16.5 M2.8 11.3 L8 16.5 L13.2 11.3"/></g></svg>
<div class="t" style="left:171.4px;top:1427.5px;font-size:20px;color:#e6e8ea;font-weight:400;">Feb 24, 4:20am</div>
<div class="t" style="left:2393.5px;top:1427.5px;font-size:20px;color:#e6e8ea;font-weight:400;">gpt-4</div>
<div class="t" style="left:171.4px;top:1491.6px;font-size:20px;color:#e6e8ea;font-weight:400;">Feb 24, 4:20am</div>
<div class="t" style="left:2393.5px;top:1491.6px;font-size:20px;color:#e6e8ea;font-weight:400;">gpt-4</div>
</body></html>
